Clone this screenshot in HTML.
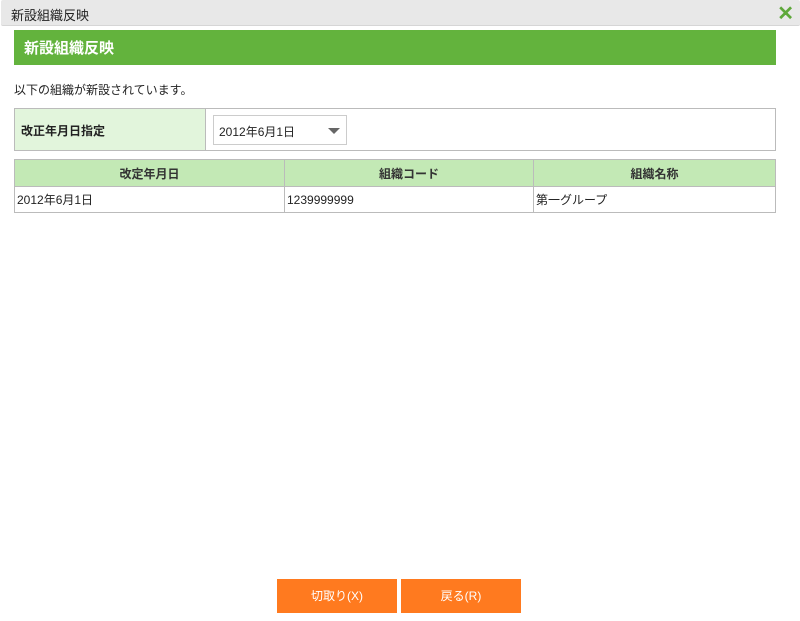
<!DOCTYPE html>
<html><head><meta charset="utf-8"><style>
*{box-sizing:border-box;margin:0;padding:0}
body{width:800px;height:621px;background:#fff;font-family:"Liberation Sans","Noto Sans CJK JP",sans-serif;font-size:13px;color:#222;position:relative;overflow:hidden}
.tb{position:absolute;left:1px;top:0;width:799px;height:26px;background:#e8e8e8;border-bottom:1px solid #d6d6d6;border-radius:2px}
.tb span{position:absolute;left:10px;top:5px;font-size:13px;color:#222}
.x{position:absolute;right:6px;top:1px;font-size:20px;font-weight:bold;color:#5ea83a}
.gh{position:absolute;left:14px;top:30px;width:762px;height:35px;background:#63b33d;color:#fff;font-weight:bold;font-size:15px;padding:7px 10px}
.msg{position:absolute;left:14px;top:81px;font-size:12px}
.f{position:absolute;left:14px;top:108px;width:762px;height:43px;border:1px solid #bbb}
.f .l{position:absolute;left:0;top:0;width:191px;height:41px;background:#e2f5dc;border-right:1px solid #bbb;font-weight:bold;font-size:12px;padding:13px 6px}
.sel{position:absolute;left:198px;top:6px;width:134px;height:30px;border:1px solid #ccc;background:#fff;font-size:12px;padding:7px 5px}
.sel i{position:absolute;right:6px;top:12px;border-left:6px solid transparent;border-right:6px solid transparent;border-top:6px solid #666}
table{position:absolute;left:14px;top:159px;width:762px;border-collapse:collapse;font-size:12px}
td,th{border:1px solid #bbb;height:27px}
th{background:#c3e9b5;font-weight:bold;color:#333}
td{padding:0 2px;height:26px}
.b{position:absolute;top:579px;width:120px;height:34px;background:#ff7a1f;color:#fff;font-size:12px;text-align:center;line-height:34px}
</style></head><body>
<div class="tb"><span>新設組織反映</span><div class="x">✕</div></div>
<div class="gh">新設組織反映</div>
<div class="msg">以下の組織が新設されています。</div>
<div class="f"><div class="l">改正年月日指定</div><div class="sel">2012年6月1日<i></i></div></div>
<table><tr><th style="width:270px">改定年月日</th><th style="width:249px">組織コード</th><th>組織名称</th></tr>
<tr><td>2012年6月1日</td><td>1239999999</td><td>第一グループ</td></tr></table>
<div class="b" style="left:277px">切取り(X)</div>
<div class="b" style="left:401px">戻る(R)</div>
</body></html>
